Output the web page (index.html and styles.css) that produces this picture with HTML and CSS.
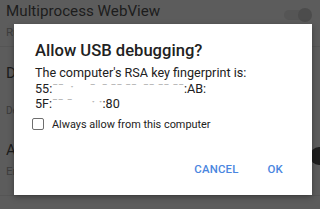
FILE: index.html
```html
<!DOCTYPE html>
<html>
<head>
<meta charset="utf-8">
<link rel="stylesheet" href="styles.css">
</head>
<body>
<div class="screen">
  <div class="list">
    <div class="row first">
      <div class="texts">
        <div class="title">Multiprocess WebView</div>
        <div class="sub">Run WebView renderer separately</div>
      </div>
      <div class="toggle"><span class="thumb"></span></div>
    </div>
    <div class="divider"></div>
    <div class="row second">
      <div class="title">Debugging</div>
    </div>
    <div class="section">Debugging</div>
    <div class="row third">
      <div class="texts">
        <div class="title">ADB debugging</div>
        <div class="sub">Enable debug mode when USB is connected</div>
      </div>
      <div class="toggle low"><span class="thumb"></span></div>
    </div>
    <div class="divider"></div>
  </div>

  <div class="dialog">
    <div class="dtitle">Allow USB debugging?</div>
    <div class="dbody">
      <div>The computer's RSA key fingerprint is:</div>
      <div>55:<span class="hid">ˉˉ  ˑ     ˉ  ˉ ˉˉ ˉˉ  ˉˉ ˉˉ ˉˉ</span>:AB:</div>
      <div>5F:<span class="hid">ˉˉ ˉ      ˑ ˑ</span>:80</div>
    </div>
    <label class="check"><span class="box"></span><span class="clabel">Always allow from this computer</span></label>
    <div class="actions">
      <span class="btn">CANCEL</span>
      <span class="btn">OK</span>
    </div>
  </div>
</div>
</body>
</html>
```
FILE: styles.css
```css
html, body {
  margin: 0;
  padding: 0;
}
body {
  width: 320px;
  height: 209px;
  overflow: hidden;
  font-family: Roboto, "Noto Sans", sans-serif;
  background: #5c5c5c;
}
.screen {
  position: relative;
  width: 320px;
  height: 209px;
  overflow: hidden;
}
.list {
  display: flex;
  flex-direction: column;
}
.row {
  display: flex;
  align-items: flex-start;
  justify-content: space-between;
  padding: 0 0 0 6px;
}
.row.first {
  height: 46px;
  padding-top: 2px;
  box-sizing: border-box;
}
.title {
  font-size: 15.2px;
  color: #1c1c1c;
  line-height: 18px;
}
.sub {
  font-size: 11.5px;
  color: #3e3e3e;
  line-height: 16px;
  margin-top: 4px;
  white-space: nowrap;
}
.toggle {
  position: relative;
  width: 26px;
  height: 10px;
  border-radius: 5px;
  background: #555;
  margin: 8px 10px 0 0;
}
.toggle .thumb {
  position: absolute;
  right: -2px;
  top: -2px;
  width: 14px;
  height: 14px;
  border-radius: 50%;
  background: #4c4c4c;
}
.divider {
  height: 1px;
  background: #555;
}
.row.second {
  height: 58px;
  padding-top: 17px;
  box-sizing: border-box;
}
.section {
  font-size: 10px;
  color: #3a3a3a;
  padding-left: 6px;
  height: 36px;
  line-height: 12px;
}
.row.third {
  height: 54px;
  box-sizing: border-box;
}
.toggle.low {
  margin-top: 10px;
  margin-right: -6px;
}
.toggle.low .thumb {
  background: #1e1e1e;
  width: 18px;
  height: 18px;
  top: -4px;
}
.dialog {
  position: absolute;
  left: 14px;
  top: 24px;
  width: 298px;
  height: 171px;
  background: #ffffff;
  box-shadow: 0 2px 6px rgba(0,0,0,0.35);
  box-sizing: border-box;
  padding: 17px 16px 0 21px;
  display: flex;
  flex-direction: column;
}
.dtitle {
  font-size: 16.6px;
  font-weight: 500;
  color: #212121;
  line-height: 20px;
}
.dbody {
  margin-top: 4px;
  font-size: 12.6px;
  color: #212121;
  line-height: 15.5px;
}
.hid {
  color: #b8b8b8;
  white-space: pre;
  letter-spacing: 0;
}
.check {
  display: flex;
  align-items: center;
  margin-top: 6px;
  margin-left: -3px;
}
.box {
  width: 10px;
  height: 10px;
  border: 1.5px solid #6e6e6e;
  border-radius: 2px;
}
.clabel {
  font-size: 10.9px;
  color: #222;
  margin-left: 8px;
}
.actions {
  display: flex;
  justify-content: flex-end;
  gap: 29px;
  margin-top: 31px;
  padding-right: 13px;
}
.btn {
  font-size: 11.4px;
  font-weight: 500;
  color: #4a86e0;
  letter-spacing: 0.2px;
}
```
